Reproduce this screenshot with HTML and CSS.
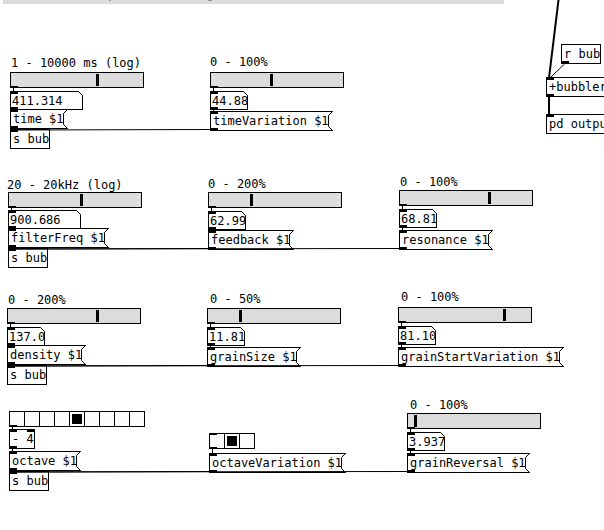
FILE: index.html
```html
<!DOCTYPE html>
<html lang="en">
<head>
<meta charset="utf-8">
<title>bubbler patch</title>
<link rel="stylesheet" href="styles.css">
</head>
<body>
<svg class="defs" aria-hidden="true">
  <symbol id="flag" viewBox="0 0 5 20"><path d="M0 0H5L.5 4.5V15.5L5 20H0Z" fill="#fff"/><path d="M0 .5H4.5L.5 4.5V15.5L4.5 19.5H0" fill="none" stroke="#000"/></symbol>
  <symbol id="corner" viewBox="0 0 5 5"><path d="M0 0H5V5Z" fill="#fff"/><path d="M0 .5H.5L4.5 4.5V5" fill="none" stroke="#000"/></symbol>
</svg>
<main class="canvas">
  <div class="banner"></div>

  <label class="comment" id="time-label" for="time-range">1 - 10000 ms (log)</label>
  <div class="node slider" id="time-slider"><input type="range" id="time-range" min="0" max="129" value="85"></div>
  <div class="node number wide" id="time-number"><input type="text" aria-label="time value" value="411.314"><svg class="corner"><use href="#corner"/></svg></div>
  <button class="node message" id="time-message">time $1<svg class="flag"><use href="#flag"/></svg></button>
  <div class="node object sink" id="time-send">s bub</div>

  <label class="comment" id="tvar-label" for="tvar-range">0 - 100%</label>
  <div class="node slider" id="tvar-slider"><input type="range" id="tvar-range" min="0" max="129" value="59"></div>
  <div class="node number" id="tvar-number"><input type="text" aria-label="timeVariation value" value="44.88"><svg class="corner"><use href="#corner"/></svg></div>
  <button class="node message" id="tvar-message">timeVariation $1<svg class="flag"><use href="#flag"/></svg></button>

  <label class="comment" id="filter-label" for="filter-range">20 - 20kHz (log)</label>
  <div class="node slider" id="filter-slider"><input type="range" id="filter-range" min="0" max="129" value="71"></div>
  <div class="node number wide" id="filter-number"><input type="text" aria-label="filterFreq value" value="900.686"><svg class="corner"><use href="#corner"/></svg></div>
  <button class="node message" id="filter-message">filterFreq $1<svg class="flag"><use href="#flag"/></svg></button>
  <div class="node object sink" id="filter-send">s bub</div>

  <label class="comment" id="feedback-label" for="feedback-range">0 - 200%</label>
  <div class="node slider" id="feedback-slider"><input type="range" id="feedback-range" min="0" max="129" value="41"></div>
  <div class="node number" id="feedback-number"><input type="text" aria-label="feedback value" value="62.99"><svg class="corner"><use href="#corner"/></svg></div>
  <button class="node message" id="feedback-message">feedback $1<svg class="flag"><use href="#flag"/></svg></button>

  <label class="comment" id="resonance-label" for="resonance-range">0 - 100%</label>
  <div class="node slider" id="resonance-slider"><input type="range" id="resonance-range" min="0" max="129" value="88"></div>
  <div class="node number" id="resonance-number"><input type="text" aria-label="resonance value" value="68.81"><svg class="corner"><use href="#corner"/></svg></div>
  <button class="node message" id="resonance-message">resonance $1<svg class="flag"><use href="#flag"/></svg></button>

  <label class="comment" id="density-label" for="density-range">0 - 200%</label>
  <div class="node slider" id="density-slider"><input type="range" id="density-range" min="0" max="129" value="88"></div>
  <div class="node number" id="density-number"><input type="text" aria-label="density value" value="137.0"><svg class="corner"><use href="#corner"/></svg></div>
  <button class="node message" id="density-message">density $1<svg class="flag"><use href="#flag"/></svg></button>
  <div class="node object sink" id="density-send">s bub</div>

  <label class="comment" id="size-label" for="size-range">0 - 50%</label>
  <div class="node slider" id="size-slider"><input type="range" id="size-range" min="0" max="129" value="31"></div>
  <div class="node number" id="size-number"><input type="text" aria-label="grainSize value" value="11.81"><svg class="corner"><use href="#corner"/></svg></div>
  <button class="node message" id="size-message">grainSize $1<svg class="flag"><use href="#flag"/></svg></button>

  <label class="comment" id="start-label" for="start-range">0 - 100%</label>
  <div class="node slider" id="start-slider"><input type="range" id="start-range" min="0" max="129" value="104"></div>
  <div class="node number" id="start-number"><input type="text" aria-label="grainStartVariation value" value="81.10"><svg class="corner"><use href="#corner"/></svg></div>
  <button class="node message" id="start-message">grainStartVariation $1<svg class="flag"><use href="#flag"/></svg></button>

  <div class="node radio source" id="octave-radio" role="radiogroup" aria-label="octave">
    <input type="radio" name="octave" aria-label="0"><input type="radio" name="octave" aria-label="1"><input type="radio" name="octave" aria-label="2"><input type="radio" name="octave" aria-label="3"><input type="radio" name="octave" aria-label="4" checked><input type="radio" name="octave" aria-label="5"><input type="radio" name="octave" aria-label="6"><input type="radio" name="octave" aria-label="7"><input type="radio" name="octave" aria-label="8">
  </div>
  <div class="node object" id="octave-minus">- 4<span class="inlet-right"></span></div>
  <button class="node message" id="octave-message">octave $1<svg class="flag"><use href="#flag"/></svg></button>
  <div class="node object sink" id="octave-send">s bub</div>

  <div class="node radio" id="ovar-radio" role="radiogroup" aria-label="octaveVariation">
    <input type="radio" name="ovar" aria-label="0"><input type="radio" name="ovar" aria-label="1" checked><input type="radio" name="ovar" aria-label="2">
  </div>
  <button class="node message" id="ovar-message">octaveVariation $1<svg class="flag"><use href="#flag"/></svg></button>

  <label class="comment" id="reversal-label" for="reversal-range">0 - 100%</label>
  <div class="node slider" id="reversal-slider"><input type="range" id="reversal-range" min="0" max="129" value="6"></div>
  <div class="node number" id="reversal-number"><input type="text" aria-label="grainReversal value" value="3.937"><svg class="corner"><use href="#corner"/></svg></div>
  <button class="node message" id="reversal-message">grainReversal $1<svg class="flag"><use href="#flag"/></svg></button>

  <div class="node object source" id="receive">r bub</div>
  <div class="node object" id="bubbler">+bubbler~</div>
  <div class="node object sink" id="output">pd output</div>

  <svg class="wires" aria-hidden="true">
    <g stroke="#000" fill="none">
      <path d="M13.5 88V91M213.5 88V91M213.5 110V111"/>
      <path d="M11.5 208V210M211.5 208V211M402.5 206V209M402.5 228V230"/>
      <path d="M10.5 324V327M210.5 324V327M210.5 346V347M401.5 323V326M401.5 345V347"/>
      <path d="M12.5 427V429M12.5 449V451M212.5 449V453M410.5 429V432M410.5 451V453"/>
      <path d="M13 130L213 129.5M11 249L211 248.5M11 249L402 248.5M10 366L210 365.5M10 366L401 365.5M12 472L212 471.5M12 472L410 471.5"/>
      <path d="M564.5 64L550 78"/>
      <path stroke-width="2" d="M558.5 0L549 78M549 97V114"/>
    </g>
    <path d="M109 0h2v1h-2zM208 0h4v1h-4z" fill="#999"/>
  </svg>
</main>
</body>
</html>
```
FILE: styles.css
```css
* { box-sizing: border-box; }

body {
  margin: 0;
  overflow: hidden;
  background: #fff;
  color: #000;
}

.canvas,
.canvas input,
.canvas button {
  font: 12px/14px "DejaVu Sans Mono", monospace;
}

.canvas {
  position: relative;
  min-height: 100vh;
  overflow: hidden;
}

.defs { position: absolute; width: 0; height: 0; }

.wires {
  position: absolute;
  inset: 0;
  width: 100%;
  height: 100%;
  pointer-events: none;
}

.banner {
  width: 501px;
  height: 4px;
  margin-left: 3px;
  background: #dcdcdc;
}

.comment { position: absolute; white-space: pre; }

/* Boxes on the patch canvas, with an inlet above and an outlet below */
.node {
  position: absolute;
  margin: 0;
  border: 1px solid #000;
  background: #fff;
  color: #000;
  white-space: pre;
}

.node::before,
.node::after,
.inlet-right {
  content: "";
  position: absolute;
  left: -1px;
  width: 8px;
  height: 3px;
  background: #000;
}

.node::before { top: -1px; }
.node::after { bottom: -1px; }
.inlet-right { top: -1px; right: -1px; left: auto; }
.source::before, .sink::after { display: none; }

.object { padding: 2px 0 2px 2px; }

.canvas .message {
  padding: 2px 4px 2px 2px;
  border-right: 0;
  border-radius: 0;
  text-align: left;
}

.flag {
  position: absolute;
  top: -1px;
  right: 0;
  width: 5px;
  height: 20px;
}

.number { width: 38px; height: 19px; }
.number.wide { width: 73px; }

.number input {
  display: block;
  width: 100%;
  height: 17px;
  padding: 2px 0 1px 1px;
  border: 0;
  background: none;
  color: #000;
}

.corner {
  position: absolute;
  top: -1px;
  right: -1px;
  width: 5px;
  height: 5px;
}

.slider { width: 134px; height: 16px; background: #dcdcdc; }
.slider::before, .slider::after, .radio::before, .radio::after { height: 2px; }
.slider::before { display: none; }

.slider input {
  display: block;
  width: 100%;
  height: 14px;
  margin: 0;
  background: none;
  appearance: none;
}

.slider input::-webkit-slider-thumb {
  width: 3px;
  height: 12px;
  border-radius: 0;
  background: #000;
  appearance: none;
}

.radio { display: flex; font-size: 0; white-space: normal; }

.radio input {
  width: 15px;
  height: 14px;
  margin: 0;
  border-right: 1px solid #000;
  background: #fcfcfc;
  appearance: none;
}

.radio input:last-child { width: 14px; border-right: 0; }
.radio input:checked { background: linear-gradient(#000, #000) center / 10px 10px no-repeat #fcfcfc; }

/* Patch coordinates */
#time-label { left: 11px; top: 56px; }
#time-slider { left: 10px; top: 72px; }
#time-number { left: 10px; top: 91px; }
#time-message { left: 10px; top: 109px; }
#time-send { left: 10px; top: 129px; }

#tvar-label { left: 210px; top: 55px; }
#tvar-slider { left: 210px; top: 72px; }
#tvar-number { left: 210px; top: 91px; }
#tvar-message { left: 210px; top: 111px; }

#filter-label { left: 7px; top: 178px; }
#filter-slider { left: 8px; top: 192px; }
#filter-number { left: 8px; top: 210px; }
#filter-message { left: 8px; top: 228px; }
#filter-send { left: 8px; top: 248px; }

#feedback-label { left: 208px; top: 177px; }
#feedback-slider { left: 208px; top: 192px; }
#feedback-number { left: 208px; top: 211px; }
#feedback-message { left: 208px; top: 230px; }

#resonance-label { left: 400px; top: 175px; }
#resonance-slider { left: 399px; top: 190px; }
#resonance-number { left: 399px; top: 209px; }
#resonance-message { left: 399px; top: 230px; }

#density-label { left: 8px; top: 293px; }
#density-slider { left: 7px; top: 308px; }
#density-number { left: 7px; top: 327px; }
#density-message { left: 7px; top: 345px; }
#density-send { left: 7px; top: 365px; }

#size-label { left: 210px; top: 292px; }
#size-slider { left: 207px; top: 308px; }
#size-number { left: 207px; top: 327px; }
#size-message { left: 207px; top: 347px; }

#start-label { left: 401px; top: 290px; }
#start-slider { left: 398px; top: 307px; }
#start-number { left: 398px; top: 326px; }
#start-message { left: 398px; top: 347px; }

#octave-radio { left: 9px; top: 411px; }
#octave-minus { left: 9px; top: 429px; }
#octave-message { left: 9px; top: 451px; }
#octave-send { left: 9px; top: 471px; }

#ovar-radio { left: 209px; top: 433px; }
#ovar-message { left: 209px; top: 453px; }

#reversal-label { left: 410px; top: 398px; }
#reversal-slider { left: 407px; top: 413px; }
#reversal-number { left: 407px; top: 432px; }
#reversal-message { left: 407px; top: 453px; }

#receive { left: 561px; top: 44px; }
#bubbler { left: 546px; top: 77px; }
#output { left: 546px; top: 114px; }
```
